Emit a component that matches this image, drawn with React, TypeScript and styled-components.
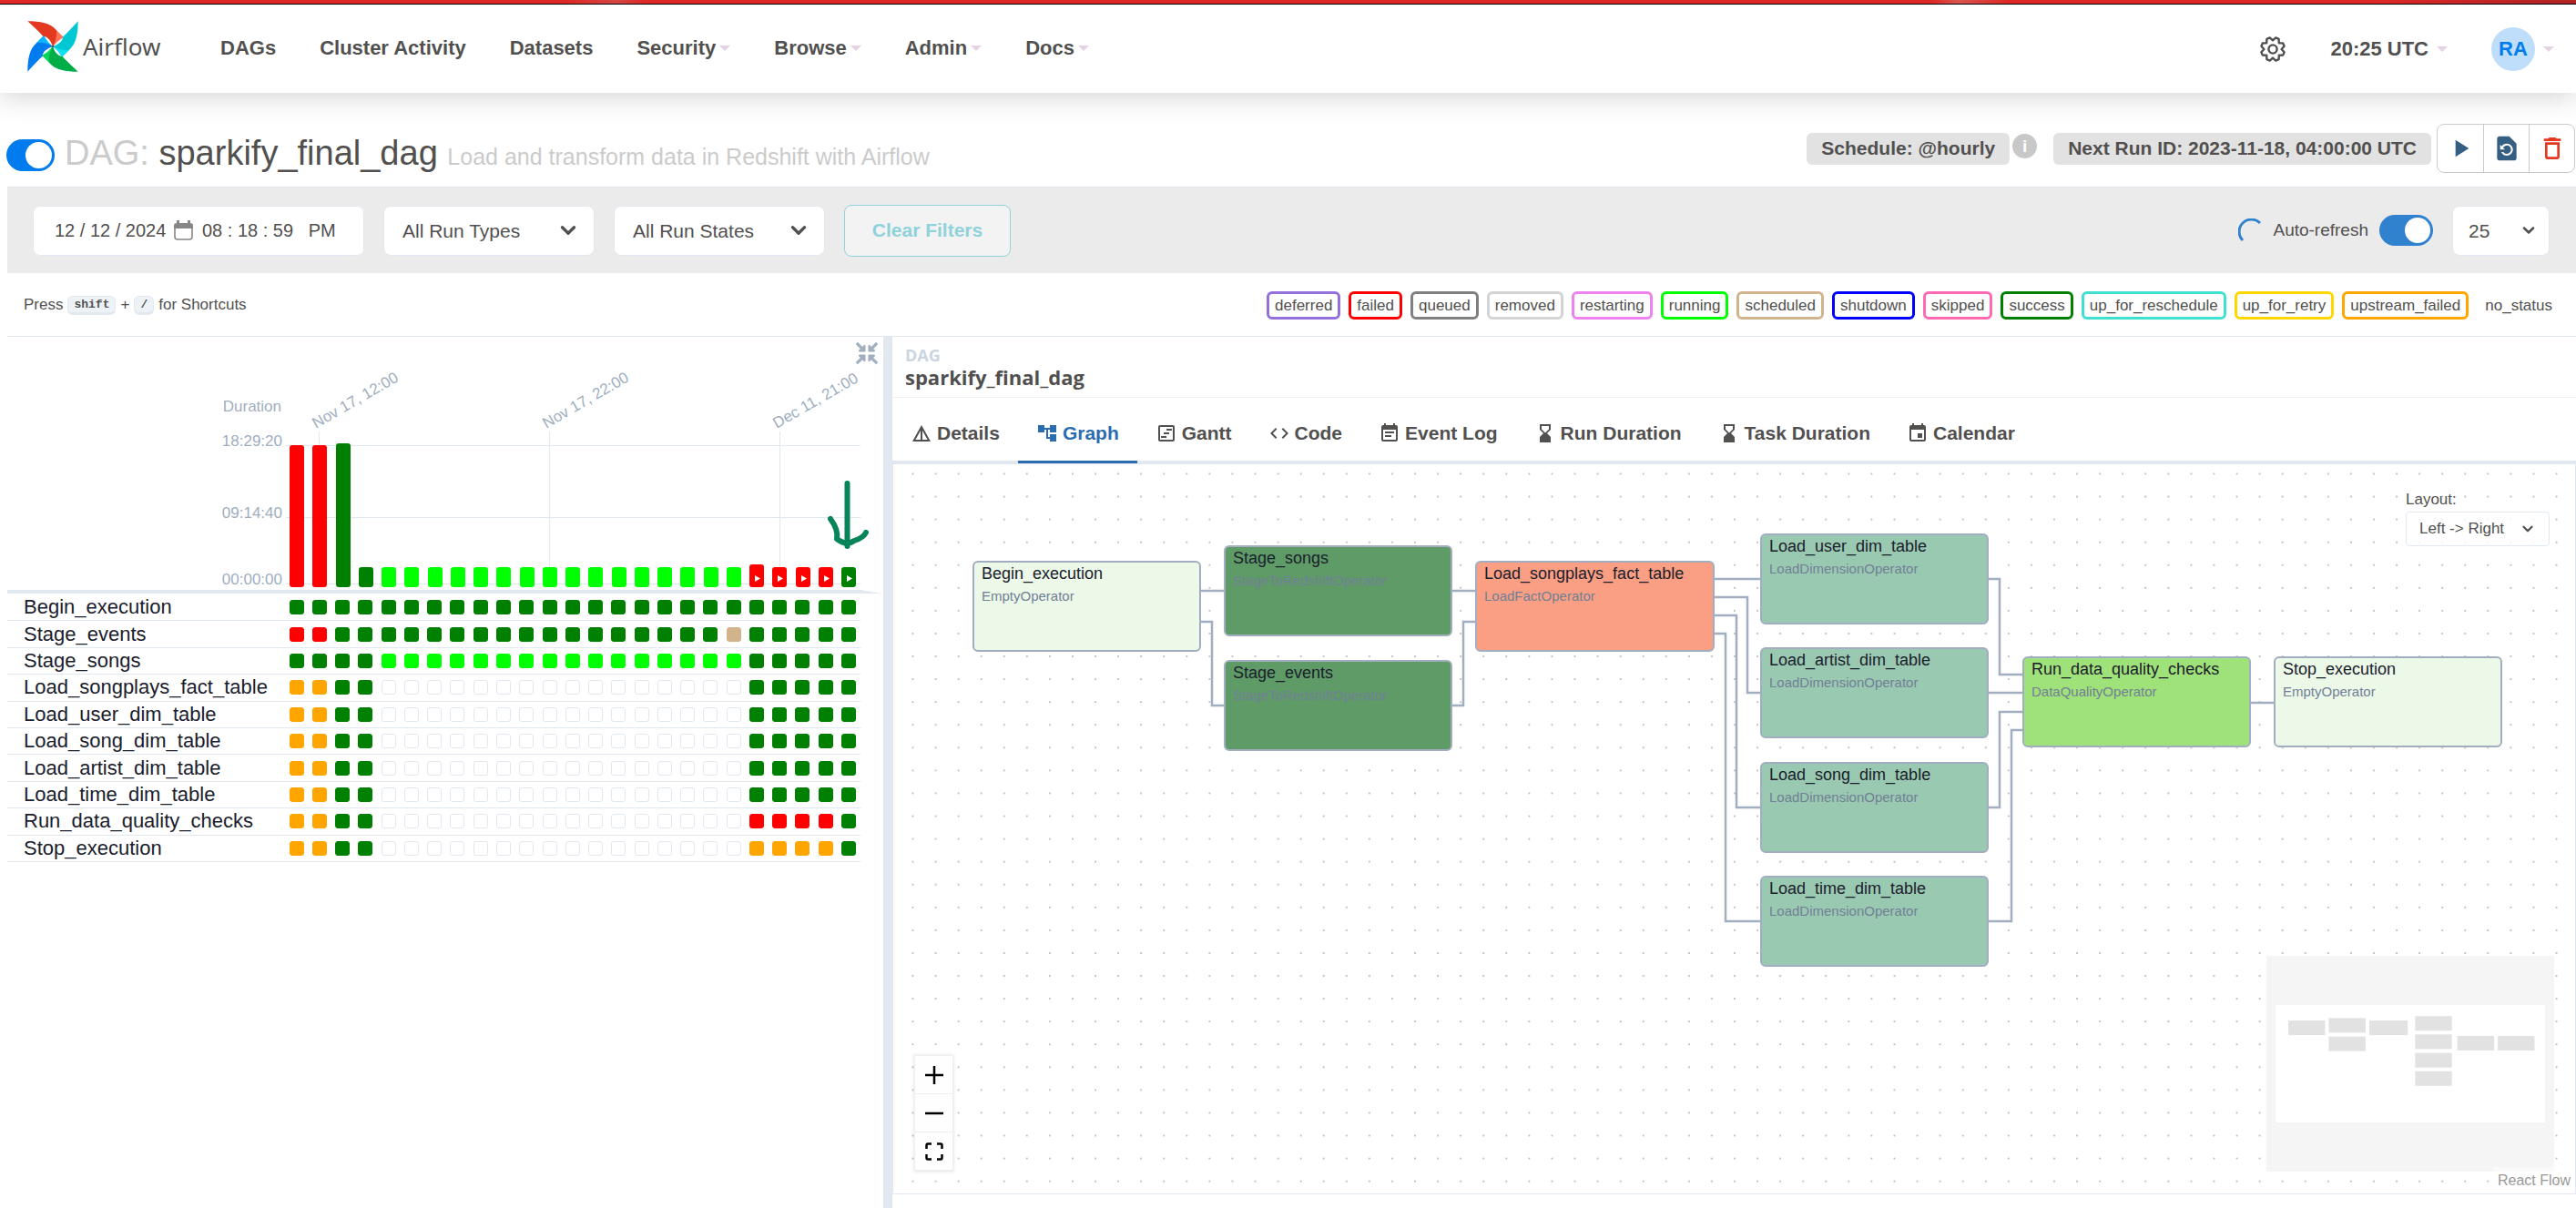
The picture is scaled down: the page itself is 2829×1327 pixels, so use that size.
import React, { useState } from "react";
import styled, { createGlobalStyle, css } from "styled-components";
import {
  MdAccountTree,
  MdCode,
  MdDeleteOutline,
  MdDetails,
  MdEvent,
  MdEventNote,
  MdHourglassBottom,
  MdOutlineViewTimeline,
  MdPlayArrow,
  MdRestorePage,
} from "react-icons/md";
import { FaCompressArrowsAlt } from "react-icons/fa";
import { ChevronDown } from "lucide-react";

const color = {
  text: "#51504f",
  dark: "#1a202c",
  line: "#e2e8f0",
  edge: "#a0aec0",
  muted: "#718096",
  blue: "#017cee",
  tab: "#2b6cb0",
};

const Global = createGlobalStyle`
  * { box-sizing: border-box; }
  body {
    margin: 0;
    background: #fff;
    color: ${color.text};
    font-family: "Liberation Sans", Arial, sans-serif;
    font-size: 21px;
  }
  button, input, select { font: inherit; color: inherit; margin: 0; }
`;

const Page = styled.div`
  min-height: 100vh;
  display: flex;
  flex-direction: column;
`;

const Strip = styled.div`
  height: 5px;
  border-bottom: 1px solid #000;
  background: linear-gradient(90deg, #e92a28 0 22%, #e04a44 24%, #e92a28 25% 75%, #e35a52 76%, #e92a28 78% 92%, #b92425);
`;

const TopBar = styled.header`
  display: flex;
  align-items: center;
  height: 97px;
  padding: 0 24px 0 30px;
  background: #fff;
  box-shadow: 0 5px 28px rgba(0, 0, 0, 0.17);
`;

const Brand = styled.a`
  display: flex;
  align-items: center;
  gap: 5px;
  width: 212px;
  padding-bottom: 6px;
  color: inherit;
  text-decoration: none;
  font-family: "Noto Sans", sans-serif;
  font-size: 26px;
`;

const Nav = styled.nav`
  display: flex;
  flex: 1;
  gap: 48px;
`;

const NavLink = styled.a`
  display: flex;
  align-items: center;
  gap: 4px;
  padding-bottom: 2px;
  color: inherit;
  text-decoration: none;
  font-size: 22px;
  font-weight: 700;
`;

const Caret = styled.span`
  border: 6px solid transparent;
  border-top-color: #e3d3e3;
  border-bottom: 0;
`;

const TopRight = styled.div`
  display: flex;
  align-items: center;
  gap: 48px;
`;

const PlainButton = styled.button`
  display: flex;
  align-items: center;
  gap: 9px;
  padding: 0;
  border: 0;
  background: none;
  font-size: 22px;
  font-weight: 700;
`;

const Avatar = styled.span`
  display: grid;
  place-items: center;
  width: 48px;
  height: 48px;
  border-radius: 50%;
  background: #bfdefb;
  color: ${color.blue};
`;

const TitleRow = styled.section`
  display: flex;
  justify-content: space-between;
  align-items: flex-start;
  height: 103px;
  padding: 34px 0 0 7px;
`;

const TitleGroup = styled.div`
  display: flex;
  align-items: center;
  gap: 11px;
  padding-top: 11px;
`;

const Title = styled.h1`
  margin: 0;
  font-size: 38px;
  line-height: 42px;
  font-weight: 400;
`;

const Faint = styled.span`
  color: #cbcbcb;
`;

const Subtitle = styled.small`
  font-size: 25px;
  color: #cbcbcb;
`;

const Switch = styled.input<{ $w: number; $h: number; $color: string }>`
  appearance: none;
  flex: none;
  display: flex;
  justify-content: flex-end;
  width: ${(p) => p.$w}px;
  height: ${(p) => p.$h}px;
  padding: 3px;
  border-radius: 999px;
  background: ${(p) => p.$color};
  &::after {
    content: "";
    height: 100%;
    aspect-ratio: 1;
    border-radius: 50%;
    background: #fff;
  }
  &:not(:checked) {
    justify-content: flex-start;
    background: #cbd5e0;
  }
`;

const TitleRight = styled.div`
  display: flex;
  align-items: center;
`;

const Badge = styled.span`
  padding: 0 16px 1px;
  border-radius: 6px;
  background: #e2e2e2;
  font-weight: 700;
  line-height: 34px;
`;

const Info = styled.span`
  display: grid;
  place-items: center;
  width: 27px;
  height: 27px;
  margin: 0 18px 5px 3px;
  border-radius: 50%;
  background: #c8c8c8;
  color: #fff;
  font-size: 19px;
  font-weight: 700;
`;

const ButtonGroup = styled.div`
  display: flex;
  margin: 0 1px 0 6px;
  height: 54px;
  border: 1px solid #cbcbcb;
  border-radius: 8px;
`;

const GroupButton = styled.button<{ $color?: string }>`
  display: grid;
  place-items: center;
  width: 50px;
  padding: 0;
  border: 0;
  background: none;
  color: ${(p) => p.$color ?? "#355e83"};
  & + & {
    border-left: 1px solid #cbcbcb;
  }
`;

const Filters = styled.form`
  display: flex;
  align-items: center;
  gap: 21px;
  height: 95px;
  margin-left: 8px;
  padding: 0 29px 0 28px;
  border-top: 1px solid ${color.line};
  background: #ebebeb;
`;

const fieldBox = css`
  height: 55px;
  border: 1px solid ${color.line};
  border-radius: 8px;
  background: #fff;
`;

const DateField = styled.fieldset`
  ${fieldBox}
  display: flex;
  align-items: center;
  width: 364px;
  margin: 0;
  padding: 0 0 0 23px;
  font-size: 20px;
  & > svg {
    margin-right: 10px;
  }
`;

const DateInput = styled.input<{ $w: number }>`
  width: ${(p) => p.$w}px;
  padding: 0;
  border: 0;
  background: none;
  outline: 0;
`;

const SelectWrap = styled.label<{ $w: number; $icon: number }>`
  display: grid;
  align-items: center;
  width: ${(p) => p.$w}px;
  & > * {
    grid-area: 1 / 1;
  }
  & > svg {
    justify-self: end;
    margin-right: ${(p) => p.$icon}px;
    pointer-events: none;
  }
`;

const Select = styled.select<{ $pad: number }>`
  ${fieldBox}
  appearance: none;
  width: 100%;
  padding: 0 0 0 ${(p) => p.$pad}px;
`;

const SmallSelect = styled(Select)`
  height: 38px;
  border-radius: 4px;
  background: rgba(255, 255, 255, 0.8);
  font-size: 17px;
`;

const Clear = styled.button`
  width: 183px;
  height: 57px;
  border: 1px solid #8fd2dc;
  border-radius: 8px;
  background: #f3f3f3;
  color: #8fd2dc;
  font-weight: 700;
`;

const AutoRefresh = styled.label`
  display: flex;
  align-items: center;
  gap: 12px;
  margin-left: auto;
  font-size: 19px;
`;

const LegendRow = styled.section`
  display: flex;
  align-items: center;
  justify-content: space-between;
  height: 70px;
  margin-left: 8px;
  padding: 1px 26px 0 18px;
  border-bottom: 1px solid ${color.line};
  font-size: 17px;
`;

const Hint = styled.p`
  display: flex;
  align-items: center;
  gap: 5px;
  margin: 0;
`;

const Kbd = styled.kbd`
  padding: 0 6px;
  border: 1px solid ${color.line};
  border-bottom-width: 3px;
  border-radius: 6px;
  background: #edf2f7;
  font: 700 13px/17px "Liberation Mono", monospace;
`;

const Legend = styled.ul`
  display: flex;
  gap: 9px;
  margin: 0;
  padding: 0;
  list-style: none;
`;

const LegendItem = styled.li<{ $color: string }>`
  padding: 0 6px;
  border: 3px solid ${(p) => p.$color};
  border-radius: 6px;
  line-height: 25px;
  &:last-child {
    padding-right: 0;
    border-right: 0;
  }
`;

const Body = styled.main`
  flex: 1;
  display: flex;
`;

const GridPanel = styled.section`
  flex: none;
  width: 970px;
  padding-left: 8px;
`;

const GridTools = styled.div`
  display: flex;
  justify-content: flex-end;
  height: 36px;
  padding: 6px 6px 0 0;
`;

const IconButton = styled.button`
  display: grid;
  place-items: center;
  width: 24px;
  height: 24px;
  padding: 0;
  border: 0;
  background: none;
  color: ${color.edge};
`;

const ChartSvg = styled.svg`
  display: block;
  font-size: 17px;
`;

const TaskTable = styled.table`
  width: 937px;
  height: 294px;
  table-layout: fixed;
  border-collapse: collapse;
  color: ${color.dark};
  font-size: 22px;
  line-height: 24px;
  tr {
    border-bottom: 1px solid ${color.line};
  }
  th {
    width: 305px;
    padding: 0 0 0 18px;
    font-weight: 400;
    text-align: left;
  }
  td {
    padding: 0;
  }
`;

const Square = styled.span<{ $color: string }>`
  display: block;
  width: 16px;
  height: 16px;
  margin: 0 auto;
  border: 1px solid ${(p) => (p.$color === "none" ? color.line : p.$color)};
  border-radius: 3px;
  background: ${(p) => p.$color};
`;

const Divider = styled.div`
  flex: none;
  width: 10px;
  background: ${color.line};
`;

const Details = styled.section`
  flex: 1;
  min-width: 0;
  display: flex;
  flex-direction: column;
  padding-bottom: 15px;
`;

const DetailsHead = styled.header`
  height: 67px;
  padding: 8px 0 0 14px;
  border-bottom: 1px solid #edf2f7;
  font-family: "Open Sans", "Noto Sans", sans-serif;
  font-weight: 700;
`;

const Crumb = styled.div`
  color: #cbd5e0;
  font-size: 18px;
  line-height: 24px;
`;

const CrumbName = styled.div`
  font-size: 22px;
  line-height: 24px;
`;

const Tabs = styled.nav`
  display: flex;
  height: 73px;
  border-bottom: 4px solid ${color.line};
`;

const Tab = styled.button<{ $on: boolean }>`
  display: flex;
  align-items: center;
  gap: 5px;
  height: 72px;
  padding: 8px 20px 0;
  border: 0;
  border-bottom: 3px solid ${(p) => (p.$on ? color.tab : "transparent")};
  background: none;
  color: ${(p) => (p.$on ? color.tab : "inherit")};
  font-weight: 700;
`;

const Canvas = styled.div`
  position: relative;
  flex: 1;
  overflow: hidden;
  border: 1px solid ${color.line};
  border-top: 0;
`;

const Layer = styled.svg`
  position: absolute;
  inset: 0;
  width: 100%;
  height: 100%;
`;

const Node = styled.article<{ $x: number; $y: number; $w: number; $bg: string }>`
  position: absolute;
  left: ${(p) => p.$x}px;
  top: ${(p) => p.$y}px;
  width: ${(p) => p.$w}px;
  height: 100px;
  padding: 0 8px;
  border: 2px solid ${color.edge};
  border-radius: 6px;
  background: ${(p) => p.$bg};
`;

const NodeName = styled.h3`
  margin: 0;
  color: ${color.dark};
  font-size: 18px;
  line-height: 25px;
  font-weight: 400;
  white-space: nowrap;
`;

const NodeKind = styled.p`
  margin: 0;
  color: ${color.muted};
  font-size: 15px;
  line-height: 24px;
`;

const LayoutBox = styled.div`
  position: absolute;
  top: 28px;
  right: 28px;
  width: 158px;
  display: grid;
  gap: 2px;
  font-size: 17px;
  line-height: 22px;
`;

const Controls = styled.div`
  position: absolute;
  left: 24px;
  bottom: 25px;
  width: 41px;
  display: grid;
  background: #fff;
  box-shadow: 0 0 3px 2px rgba(0, 0, 0, 0.08);
`;

const ControlButton = styled.button`
  display: grid;
  place-items: center;
  height: 42px;
  padding: 0;
  border: 0;
  border-bottom: 1px solid #eee;
  background: #fefefe;
`;

const MiniMap = styled.svg`
  position: absolute;
  right: 23px;
  bottom: 24px;
  width: 316px;
  height: 237px;
`;

const Credit = styled.a`
  position: absolute;
  right: 0;
  bottom: 0;
  padding: 3px 5px;
  background: rgba(255, 255, 255, 0.5);
  color: #999;
  font-size: 16px;
  line-height: 23px;
  text-decoration: none;
`;

const blades = [
  ["#e43921", "#ff7557"],
  ["#00c7d4", "#11e1ee"],
  ["#00ad46", "#04d659"],
  ["#017cee", "#0cb6ff"],
];

const Logo = () => (
  <svg width="56" height="56" viewBox="91 63 168 168" aria-hidden="true">
    {blades.map(([main, light], i) => (
      <g key={main} transform={`rotate(${i * 90} 175 147)`}>
        <path fill={light} d="M186 92 L211 117 Q190 128 175 147 Z" />
        <path fill={main} d="M92 64 C132 64 168 70 187 94 Q190 122 175 147 Q164 114 142 113 Q136 104 92 64 Z" />
      </g>
    ))}
    <circle cx="175" cy="147" r="4" fill="#51504f" />
  </svg>
);

const gearOutline = Array.from({ length: 8 }, (_, k) =>
  [
    [-22.5, 9.6],
    [-8, 13],
    [8, 13],
  ].map(([deg, r]) => {
    const a = ((22.5 + k * 45 + deg) * Math.PI) / 180;
    return `${(15 + r * Math.sin(a)).toFixed(2)},${(15 - r * Math.cos(a)).toFixed(2)}`;
  }),
)
  .flat()
  .join(" ");

const Gear = () => (
  <svg width="30" height="30" fill="none" stroke="currentColor" strokeWidth="2.4" strokeLinejoin="round" aria-hidden="true">
    <polygon points={gearOutline} />
    <circle cx="15" cy="15" r="4.6" />
  </svg>
);

const navItems: [string, boolean][] = [
  ["DAGs", false],
  ["Cluster Activity", false],
  ["Datasets", false],
  ["Security", true],
  ["Browse", true],
  ["Admin", true],
  ["Docs", true],
];

const legend: [string, string][] = [
  ["deferred", "mediumpurple"],
  ["failed", "red"],
  ["queued", "gray"],
  ["removed", "lightgrey"],
  ["restarting", "violet"],
  ["running", "lime"],
  ["scheduled", "tan"],
  ["shutdown", "blue"],
  ["skipped", "hotpink"],
  ["success", "green"],
  ["up_for_reschedule", "turquoise"],
  ["up_for_retry", "gold"],
  ["upstream_failed", "orange"],
  ["no_status", "transparent"],
];

const states: Record<string, [string, string]> = {
  g: ["green", "success"],
  r: ["red", "failed"],
  n: ["lime", "running"],
  o: ["orange", "upstream_failed"],
  t: ["tan", "scheduled"],
  ".": ["none", "no_status"],
};

const loadRow = "oogg" + ".".repeat(16) + "ggggg";
const tasks: [string, string][] = [
  ["Begin_execution", "g".repeat(25)],
  ["Stage_events", "rr" + "g".repeat(17) + "tggggg"],
  ["Stage_songs", "gggg" + "n".repeat(16) + "ggggg"],
  ["Load_songplays_fact_table", loadRow],
  ["Load_user_dim_table", loadRow],
  ["Load_song_dim_table", loadRow],
  ["Load_artist_dim_table", loadRow],
  ["Load_time_dim_table", loadRow],
  ["Run_data_quality_checks", "oogg" + ".".repeat(16) + "rrrrg"],
  ["Stop_execution", "oogg" + ".".repeat(16) + "oooog"],
];

const runs = "rrgg" + "n".repeat(16) + "rrrrg";
const runTop = (i: number) => (i < 2 ? 489 : i === 2 ? 487 : i === 20 ? 620 : 623);

const DurationChart = () => (
  <ChartSvg width="962" height="247" viewBox="8 406 962 247" role="img" aria-label="Run durations">
    <g stroke={color.line} fill="none">
      {[489, 568, 641].map((y) => (
        <path key={y} d={`M314 ${y}.5H945`} />
      ))}
      {[350, 603, 856].map((x) => (
        <path key={x} d={`M${x}.5 474V642`} />
      ))}
    </g>
    <g fill={color.edge}>
      <g textAnchor="end">
        <text x="309" y="452">Duration</text>
        <text x="310" y="490">18:29:20</text>
        <text x="310" y="569">09:14:40</text>
        <text x="310" y="642">00:00:00</text>
      </g>
      <text transform="translate(347 471) rotate(-30)">Nov 17, 12:00</text>
      <text transform="translate(600 471) rotate(-30)">Nov 17, 22:00</text>
      <text transform="translate(853 471) rotate(-30)">Dec 11, 21:00</text>
    </g>
    {runs.split("").map((s, i) => {
      const x = Math.round(318 + i * 25.25);
      return (
        <g key={i}>
          <rect x={x} y={runTop(i)} width="16" height={645 - runTop(i)} rx="3" fill={states[s][0]} />
          {i > 19 && <path fill="#fff" d={`M${x + 6} 632 L${x + 12} 635.5 L${x + 6} 639 Z`} />}
        </g>
      );
    })}
    <path fill={color.line} d="M8 648H945L968 652H8Z" />
    <g stroke="#08845a" strokeWidth="6" strokeLinecap="round" strokeLinejoin="round" fill="none">
      <path d="M930.5 531V600" />
      <path d="M912 570Q921 582 919 592Q930 600 938 594Q948 591 951 585" />
    </g>
  </ChartSvg>
);

const tabs = [
  { name: "Details", icon: MdDetails },
  { name: "Graph", icon: MdAccountTree },
  { name: "Gantt", icon: MdOutlineViewTimeline },
  { name: "Code", icon: MdCode },
  { name: "Event Log", icon: MdEventNote },
  { name: "Run Duration", icon: MdHourglassBottom },
  { name: "Task Duration", icon: MdHourglassBottom },
  { name: "Calendar", icon: MdEvent },
];

const nodes = [
  { name: "Begin_execution", kind: "EmptyOperator", x: 87, y: 106, w: 251, bg: "#ecf8e8" },
  { name: "Stage_songs", kind: "StageToRedshiftOperator", x: 363, y: 89, w: 251, bg: "#5f9b67" },
  { name: "Stage_events", kind: "StageToRedshiftOperator", x: 363, y: 215, w: 251, bg: "#5f9b67" },
  { name: "Load_songplays_fact_table", kind: "LoadFactOperator", x: 639, y: 106, w: 263, bg: "#fa9f83" },
  { name: "Load_user_dim_table", kind: "LoadDimensionOperator", x: 952, y: 76, w: 251, bg: "#9ac9b1" },
  { name: "Load_artist_dim_table", kind: "LoadDimensionOperator", x: 952, y: 201, w: 251, bg: "#9ac9b1" },
  { name: "Load_song_dim_table", kind: "LoadDimensionOperator", x: 952, y: 327, w: 251, bg: "#9ac9b1" },
  { name: "Load_time_dim_table", kind: "LoadDimensionOperator", x: 952, y: 452, w: 251, bg: "#9ac9b1" },
  { name: "Run_data_quality_checks", kind: "DataQualityOperator", x: 1240, y: 211, w: 251, bg: "#a0e27a" },
  { name: "Stop_execution", kind: "EmptyOperator", x: 1516, y: 211, w: 251, bg: "#ecf8e8" },
];

const edges = [
  "M338 139H363",
  "M338 173H350V265H363",
  "M614 139H639",
  "M614 265H626V173H639",
  "M902 126H952",
  "M902 146H938V251H952",
  "M902 166H926V377H952",
  "M902 186H914V502H952",
  "M1203 126H1215V231H1240",
  "M1203 251H1240",
  "M1203 377H1215V272H1240",
  "M1203 502H1228V292H1240",
  "M1491 262H1516",
];

const FlowCanvas = () => (
  <Canvas>
    <Layer aria-hidden="true">
      <pattern id="dots" x="20.5" y="9.5" width="25.07" height="25.07" patternUnits="userSpaceOnUse">
        <circle cx="1" cy="1" r="0.9" fill="#a9a9ae" />
      </pattern>
      <rect width="100%" height="100%" fill="url(#dots)" />
      <path d={edges.join("")} fill="none" stroke={color.edge} strokeWidth="2.5" />
    </Layer>
    {nodes.map((n) => (
      <Node key={n.name} $x={n.x} $y={n.y} $w={n.w} $bg={n.bg}>
        <NodeName>{n.name}</NodeName>
        <NodeKind>{n.kind}</NodeKind>
      </Node>
    ))}
    <LayoutBox>
      <label htmlFor="layout">Layout:</label>
      <SelectWrap as="div" $w={158} $icon={15}>
        <SmallSelect id="layout" $pad={14}>
          <option>{"Left -> Right"}</option>
        </SmallSelect>
        <ChevronDown size={18} strokeWidth={3} />
      </SelectWrap>
    </LayoutBox>
    <Controls>
      <ControlButton aria-label="Zoom in">
        <svg width="20" height="20" stroke="#000" strokeWidth="2.5">
          <path d="M0 10H20M10 0V20" />
        </svg>
      </ControlButton>
      <ControlButton aria-label="Zoom out">
        <svg width="20" height="20" stroke="#000" strokeWidth="2.5">
          <path d="M0 10H20" />
        </svg>
      </ControlButton>
      <ControlButton aria-label="Fit view">
        <svg width="20" height="20" stroke="#000" strokeWidth="2.5" fill="none">
          <path d="M1.5 7V3Q1.5 1.5 3 1.5H7M13 1.5H17Q18.5 1.5 18.5 3V7M18.5 13V17Q18.5 18.5 17 18.5H13M7 18.5H3Q1.5 18.5 1.5 17V13" />
        </svg>
      </ControlButton>
    </Controls>
    <MiniMap viewBox="2489 1050 316 237" aria-label="Mini map">
      <rect x="2489" y="1050" width="316" height="237" fill="#f5f5f5" />
      <rect x="2499" y="1104" width="296" height="129" fill="#fff" />
      <g fill="#e2e2e2">
        {nodes.map((n) => (
          <rect key={n.name} x={2499 + n.x * 0.161} y={1104 + n.y * 0.161} width={n.w * 0.161} height="16" />
        ))}
      </g>
    </MiniMap>
    <Credit href="#">React Flow</Credit>
  </Canvas>
);

export default function App() {
  const [tab, setTab] = useState("Graph");
  return (
    <Page>
      <Global />
      <Strip />
      <TopBar>
        <Brand href="#">
          <Logo />
          Airflow
        </Brand>
        <Nav>
          {navItems.map(([name, menu]) => (
            <NavLink key={name} href="#">
              {name}
              {menu && <Caret />}
            </NavLink>
          ))}
        </Nav>
        <TopRight>
          <PlainButton aria-label="Settings">
            <Gear />
          </PlainButton>
          <PlainButton>
            20:25 UTC
            <Caret />
          </PlainButton>
          <PlainButton>
            <Avatar>RA</Avatar>
            <Caret />
          </PlainButton>
        </TopRight>
      </TopBar>

      <TitleRow>
        <TitleGroup>
          <Switch type="checkbox" defaultChecked aria-label="Pause or unpause the DAG" $w={53} $h={35} $color={color.blue} />
          <Title>
            <Faint>DAG:</Faint> sparkify_final_dag <Subtitle>Load and transform data in Redshift with Airflow</Subtitle>
          </Title>
        </TitleGroup>
        <TitleRight>
          <Badge>Schedule: @hourly</Badge>
          <Info>i</Info>
          <Badge>Next Run ID: 2023-11-18, 04:00:00 UTC</Badge>
          <ButtonGroup>
            <GroupButton aria-label="Trigger DAG">
              <MdPlayArrow size={32} />
            </GroupButton>
            <GroupButton aria-label="Reparse DAG">
              <MdRestorePage size={32} />
            </GroupButton>
            <GroupButton aria-label="Delete DAG" $color="#e43921">
              <MdDeleteOutline size={32} />
            </GroupButton>
          </ButtonGroup>
        </TitleRight>
      </TitleRow>

      <Filters onSubmit={(e) => e.preventDefault()}>
        <DateField aria-label="Base date">
          <DateInput $w={131} aria-label="Date" defaultValue="12 / 12 / 2024" />
          <svg width="21" height="22" aria-hidden="true">
            <path fill="#868686" d="M3 3H18Q21 3 21 6V9H0V6Q0 3 3 3ZM3 0H6V4H3ZM15 0H18V4H15Z" />
            <path fill="none" stroke="#868686" strokeWidth="1.6" d="M1 8V18Q1 21 4 21H17Q20 21 20 18V8" />
          </svg>
          <DateInput $w={160} aria-label="Time" defaultValue="08 : 18 : 59   PM" />
        </DateField>
        <SelectWrap $w={232} $icon={16}>
          <Select aria-label="Run types" $pad={20}>
            <option>All Run Types</option>
          </Select>
          <ChevronDown size={26} strokeWidth={3} />
        </SelectWrap>
        <SelectWrap $w={232} $icon={16}>
          <Select aria-label="Run states" $pad={20}>
            <option>All Run States</option>
          </Select>
          <ChevronDown size={26} strokeWidth={3} />
        </SelectWrap>
        <Clear type="button">Clear Filters</Clear>
        <AutoRefresh>
          <svg width="26" height="26" fill="none" stroke="#3182ce" strokeWidth="3" aria-hidden="true">
            <path d="M5 24A12 12 0 0 1 24 5" />
          </svg>
          Auto-refresh
          <Switch type="checkbox" defaultChecked $w={59} $h={34} $color="#3182ce" />
        </AutoRefresh>
        <SelectWrap $w={107} $icon={13}>
          <Select aria-label="Number of runs" $pad={17}>
            <option>25</option>
          </Select>
          <ChevronDown size={20} strokeWidth={3} />
        </SelectWrap>
      </Filters>

      <LegendRow>
        <Hint>
          Press <Kbd>shift</Kbd> + <Kbd>/</Kbd> for Shortcuts
        </Hint>
        <Legend>
          {legend.map(([name, c]) => (
            <LegendItem key={name} $color={c}>
              {name}
            </LegendItem>
          ))}
        </Legend>
      </LegendRow>

      <Body>
        <GridPanel>
          <GridTools>
            <IconButton aria-label="Collapse grid">
              <FaCompressArrowsAlt size={24} />
            </IconButton>
          </GridTools>
          <DurationChart />
          <TaskTable>
            <tbody>
              {tasks.map(([name, row]) => (
                <tr key={name}>
                  <th scope="row">{name}</th>
                  {row.split("").map((s, i) => (
                    <td key={i}>
                      <Square $color={states[s][0]} role="img" aria-label={states[s][1]} />
                    </td>
                  ))}
                </tr>
              ))}
            </tbody>
          </TaskTable>
        </GridPanel>
        <Divider />
        <Details>
          <DetailsHead>
            <Crumb>DAG</Crumb>
            <CrumbName>sparkify_final_dag</CrumbName>
          </DetailsHead>
          <Tabs>
            {tabs.map(({ name, icon: Icon }) => (
              <Tab key={name} $on={tab === name} onClick={() => setTab(name)}>
                <Icon size={24} />
                {name}
              </Tab>
            ))}
          </Tabs>
          <FlowCanvas />
        </Details>
      </Body>
    </Page>
  );
}
